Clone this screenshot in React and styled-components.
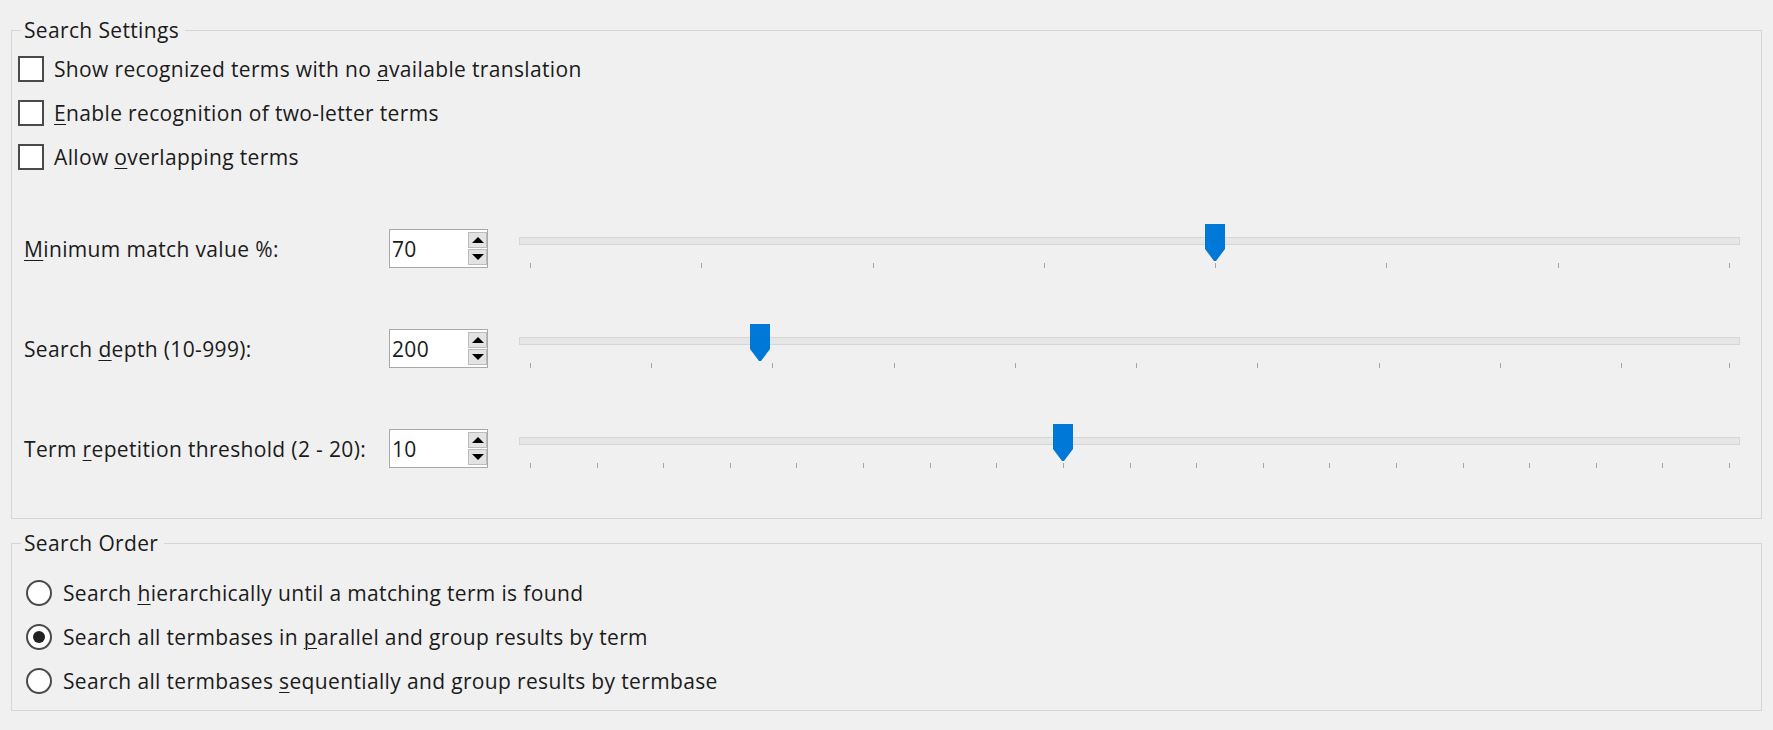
import React from "react";
import styled, { createGlobalStyle } from "styled-components";

const GlobalStyle = createGlobalStyle`
  html, body {
    margin: 0;
    background: #f0f0f0;
  }
  body {
    font-family: "Segoe UI", "Open Sans", "Noto Sans", sans-serif;
    font-size: 21px;
    letter-spacing: 0.35px;
    color: #1b1b1b;
  }
`;

const Page = styled.div`
  display: flex;
  flex-direction: column;
  gap: 10px;
  padding: 16px 11px 0 11px;
`;

const Group = styled.fieldset`
  margin: 0;
  border: 1px solid #d5d5d5;
  padding: ${(p) => p.$pad || "3px 21px 48px 6px"};
  min-width: 0;
`;

const Legend = styled.legend`
  margin-left: 3px;
  padding: 0 6px 0 3px;
  line-height: 28px;
`;

const Key = styled.u`
  text-underline-offset: 3px;
  text-decoration-thickness: 1px;
`;

const CheckRow = styled.label`
  display: flex;
  align-items: center;
  gap: 10px;
  height: 44px;
`;

const CheckBox = styled.span`
  width: 26px;
  height: 26px;
  box-sizing: border-box;
  border: 2px solid #4a4a4a;
  background: #fff;
  flex-shrink: 0;
`;

const Sliders = styled.div`
  display: flex;
  flex-direction: column;
  gap: 54px;
  margin-top: 45px;
  padding-left: 6px;
`;

const SliderRow = styled.div`
  display: flex;
  align-items: flex-start;
  height: 46px;
`;

const FieldLabel = styled.div`
  width: 365px;
  height: 39px;
  margin-top: 5px;
  display: flex;
  align-items: center;
  flex-shrink: 0;
  white-space: nowrap;
`;

const Spin = styled.div`
  width: 99px;
  height: 39px;
  margin-top: 5px;
  box-sizing: border-box;
  border: 1px solid #a9a9a9;
  background: #fff;
  display: flex;
  align-items: center;
  flex-shrink: 0;
`;

const SpinValue = styled.span`
  flex: 1;
  padding-left: 2px;
`;

const SpinButtons = styled.div`
  display: flex;
  flex-direction: column;
  gap: 1px;
  padding: 2px 0;
  align-self: stretch;
`;

const SpinButton = styled.div`
  width: 19px;
  height: 16px;
  box-sizing: border-box;
  border: 1px solid #bcbcbc;
  background: #e3e3e3;
  display: flex;
  align-items: center;
  justify-content: center;
  &::after {
    content: "";
    border-left: 6px solid transparent;
    border-right: 6px solid transparent;
    ${(p) =>
      p.$down
        ? "border-top: 6px solid #000;"
        : "border-bottom: 6px solid #000;"}
  }
`;

const SliderBox = styled.div`
  position: relative;
  flex: 1;
  height: 46px;
  margin-left: 31px;
`;

const Track = styled.div`
  margin-top: 13px;
  height: 8px;
  box-sizing: border-box;
  border: 1px solid #d6d6d6;
  background: #e6e6e6;
`;

const TickRow = styled.div`
  position: relative;
  height: 5px;
  margin-top: 18px;
`;

const Tick = styled.span`
  position: absolute;
  top: 0;
  width: 1px;
  height: 5px;
  background: #a6a6a6;
`;

const Thumb = styled.svg`
  position: absolute;
  top: 0;
  margin-left: -10px;
`;

const RadioRow = styled.label`
  display: flex;
  align-items: center;
  gap: 11px;
  height: 44px;
  padding-left: 8px;
`;

const Radio = styled.span`
  width: 26px;
  height: 26px;
  box-sizing: border-box;
  border-radius: 50%;
  border: 2px solid #4a4a4a;
  background: #fff;
  display: flex;
  align-items: center;
  justify-content: center;
  flex-shrink: 0;
  &::after {
    content: "";
    width: 12px;
    height: 12px;
    border-radius: 50%;
    background: ${(p) => (p.$checked ? "#222" : "transparent")};
  }
`;

const pos = (p) => `calc(11px + (100% - 22px) * ${p})`;

function Slider({ min, max, step, value }) {
  const ticks = [];
  for (let v = min; v < max; v += step) ticks.push(v);
  ticks.push(max);
  const at = (v) => (v - min) / (max - min);
  return (
    <SliderBox>
      <Track />
      <TickRow>
        {ticks.map((t) => (
          <Tick key={t} style={{ left: pos(at(t)) }} />
        ))}
      </TickRow>
      <Thumb width="20" height="38" viewBox="0 0 20 38" style={{ left: pos(at(value)) }}>
        <polygon points="0,0 20,0 20,25 11,37 9,37 0,25" fill="#0078d7" />
      </Thumb>
    </SliderBox>
  );
}

function SpinSlider({ label, value, min, max, step }) {
  return (
    <SliderRow>
      <FieldLabel>{label}</FieldLabel>
      <Spin>
        <SpinValue>{value}</SpinValue>
        <SpinButtons>
          <SpinButton />
          <SpinButton $down />
        </SpinButtons>
      </Spin>
      <Slider min={min} max={max} step={step} value={value} />
    </SliderRow>
  );
}

export default function App() {
  return (
    <>
      <GlobalStyle />
      <Page>
        <Group>
          <Legend>Search Settings</Legend>
          <CheckRow>
            <CheckBox />
            <span>
              Show recognized terms with no <Key>a</Key>vailable translation
            </span>
          </CheckRow>
          <CheckRow>
            <CheckBox />
            <span>
              <Key>E</Key>nable recognition of two-letter terms
            </span>
          </CheckRow>
          <CheckRow>
            <CheckBox />
            <span>
              Allow <Key>o</Key>verlapping terms
            </span>
          </CheckRow>
          <Sliders>
            <SpinSlider
              label={<span><Key>M</Key>inimum match value %:</span>}
              value={70}
              min={30}
              max={100}
              step={10}
            />
            <SpinSlider
              label={<span>Search <Key>d</Key>epth (10-999):</span>}
              value={200}
              min={10}
              max={999}
              step={100}
            />
            <SpinSlider
              label={<span>Term <Key>r</Key>epetition threshold (2 - 20):</span>}
              value={10}
              min={2}
              max={20}
              step={1}
            />
          </Sliders>
        </Group>
        <Group $pad="14px 21px 7px 6px">
          <Legend>Search Order</Legend>
          <RadioRow>
            <Radio />
            <span>
              Search <Key>h</Key>ierarchically until a matching term is found
            </span>
          </RadioRow>
          <RadioRow>
            <Radio $checked />
            <span>
              Search all termbases in <Key>p</Key>arallel and group results by term
            </span>
          </RadioRow>
          <RadioRow>
            <Radio />
            <span>
              Search all termbases <Key>s</Key>equentially and group results by termbase
            </span>
          </RadioRow>
        </Group>
      </Page>
    </>
  );
}
